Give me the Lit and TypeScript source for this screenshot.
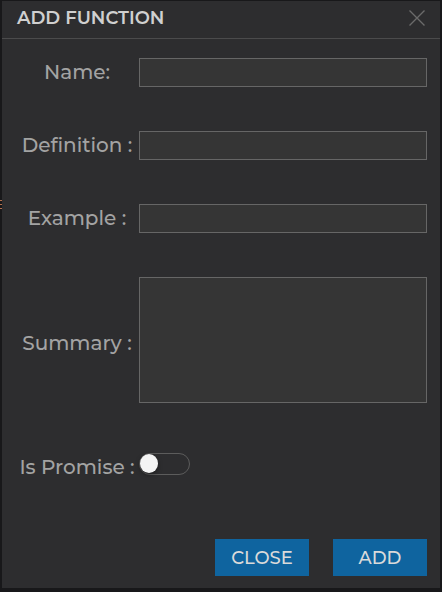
import { LitElement, html, css } from "lit";
import { customElement } from "lit/decorators.js";

@customElement("app-root")
export class AppRoot extends LitElement {
  static styles = css`
    :host {
      display: block;
      position: relative;
      box-sizing: border-box;
      min-height: 100vh;
      padding: 1px 2px 3px;
      background: #18181a;
      font-family: Montserrat, Inter, "Liberation Sans", sans-serif;
      color: #a3a3a3;
    }
    *,
    *::before {
      box-sizing: border-box;
    }
    /* sliver of the editor page behind the dialog */
    .behind {
      position: absolute;
      left: 0;
      top: 200px;
      width: 2px;
      height: 9px;
      background: repeating-linear-gradient(#b5714f 0 1px, transparent 1px 4px);
    }
    .dialog {
      background: #2d2d2f;
    }
    .header {
      display: flex;
      align-items: center;
      justify-content: space-between;
      height: 38px;
      padding: 0 15px;
      padding-bottom: 3px;
      border-bottom: 1px solid #4b4b4c;
    }
    .title {
      margin: 0;
      font-size: 18px;
      line-height: 24px;
      font-weight: 600;
      color: #d0d0d0;
    }
    .dismiss {
      display: flex;
      padding: 0;
      border: 0;
      background: none;
      color: #6b6b6b;
    }
    .form {
      display: grid;
      grid-template-columns: 120px 1fr;
      align-items: center;
      row-gap: 44px;
      padding: 19px 13px 12px 15px;
    }
    .label {
      padding-bottom: 1px;
      font-size: 20px;
      line-height: 28px;
      font-weight: 500;
      text-align: center;
      white-space: nowrap;
    }
    .low {
      padding-top: 6px;
      padding-bottom: 0;
    }
    .field {
      display: block;
      width: 100%;
      height: 29px;
      margin: 0;
      padding: 4px 8px;
      border: 1px solid #666;
      border-radius: 0;
      outline: 0;
      background: #353535;
      color: #d0d0d0;
      font: inherit;
      font-size: 16px;
      resize: none;
    }
    .area {
      height: 126px;
    }
    .grid-cell {
      padding-left: 2px;
    }
    .switch {
      appearance: none;
      display: block;
      width: 51px;
      height: 22px;
      margin: 0;
      border: 1px solid #5c5c5c;
      border-radius: 11px;
    }
    .switch::before {
      content: "";
      display: block;
      width: 18px;
      height: 19px;
      border-radius: 50%;
      background: #f4f4f4;
      box-shadow: 0 2px 5px rgba(0, 0, 0, 0.35);
    }
    .switch:checked::before {
      margin-left: auto;
    }
    .actions {
      display: flex;
      justify-content: flex-end;
      gap: 24px;
      padding: 46px 13px 12px;
    }
    .action {
      width: 94px;
      height: 37px;
      padding: 0;
      border: 0;
      background: #0f649f;
      color: #dadada;
      font: inherit;
      font-size: 18px;
      font-weight: 500;
    }
  `;

  render() {
    return html`
      <div class="behind"></div>
      <div class="dialog" role="dialog" aria-labelledby="title">
        <header class="header">
          <h1 class="title" id="title">ADD FUNCTION</h1>
          <button class="dismiss" type="button" aria-label="Dismiss">
            <svg width="16" height="16" viewBox="0 0 16 16" fill="none" stroke="currentColor" stroke-width="1.4">
              <path d="M.5 .5l15 15M15.5 .5l-15 15" />
            </svg>
          </button>
        </header>
        <form>
          <div class="form">
            <label class="label" for="name">Name:</label>
            <div class="grid-cell"><input class="field" id="name" type="text" /></div>
            <label class="label" for="definition">Definition :</label>
            <div class="grid-cell"><input class="field" id="definition" type="text" /></div>
            <label class="label" for="example">Example :</label>
            <div class="grid-cell"><input class="field" id="example" type="text" /></div>
            <label class="label low" for="summary">Summary :</label>
            <div class="grid-cell"><textarea class="field area" id="summary"></textarea></div>
            <label class="label low" for="promise">Is Promise :</label>
            <div class="grid-cell"><input class="switch" id="promise" type="checkbox" role="switch" /></div>
          </div>
          <div class="actions">
            <button class="action" type="button">CLOSE</button>
            <button class="action" type="button">ADD</button>
          </div>
        </form>
      </div>
    `;
  }
}
